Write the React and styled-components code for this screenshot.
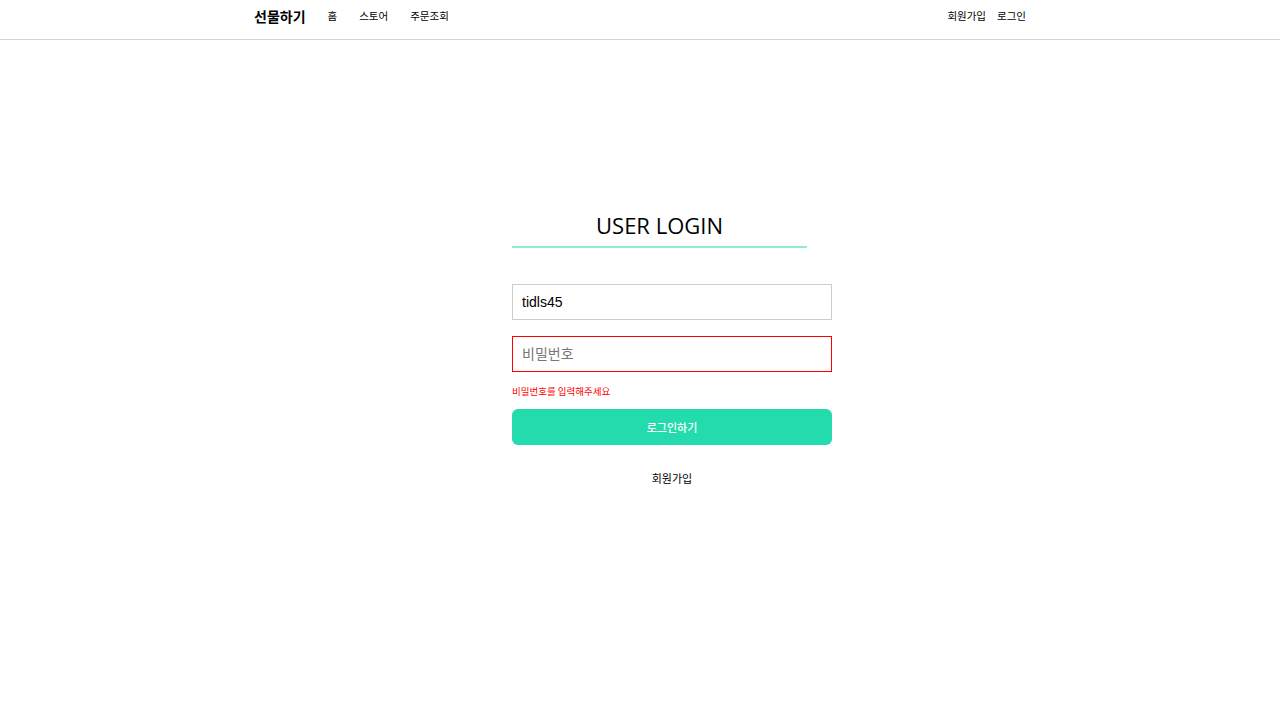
import React from "react";
import styled, { createGlobalStyle } from "styled-components";

const Global = createGlobalStyle`
  * { box-sizing: border-box; }
  body {
    margin: 0;
    background: #fff;
    color: #000;
    font-family: "Liberation Sans", "Noto Sans CJK KR", sans-serif;
  }
`;

const Header = styled.header`
  height: 40px;
  padding-bottom: 8px;
  border-bottom: 1px solid #d4d4d4;
`;

const HeaderInner = styled.div`
  width: 772px;
  height: 100%;
  margin: 0 auto;
  display: flex;
  align-items: center;
  justify-content: space-between;
`;

const NavGroup = styled.nav`
  display: flex;
  align-items: center;
  gap: ${(p) => p.$gap}px;
`;

const Logo = styled.a`
  font-size: 14px;
  font-weight: 700;
  color: #000;
  text-decoration: none;
  font-family: "Noto Sans CJK KR", sans-serif;
`;

const NavLink = styled.a`
  font-size: 10.5px;
  color: #000;
  text-decoration: none;
  font-family: "Noto Sans CJK KR", sans-serif;
`;

const Main = styled.main`
  display: flex;
  justify-content: center;
  padding-top: 169px;
  padding-left: 64px;
`;

const Form = styled.form`
  width: 320px;
  display: flex;
  flex-direction: column;
`;

const Title = styled.h1`
  margin: 0;
  width: 295px;
  text-align: center;
  font-family: "Open Sans", sans-serif;
  font-weight: 400;
  font-size: 22px;
  line-height: 32px;
  padding-bottom: 5px;
  border-bottom: 2px solid #8eead4;
  margin-bottom: 36px;
`;

const Input = styled.input`
  width: 100%;
  height: 36px;
  border: 1px solid ${(p) => (p.$error ? "#ff0000" : "#cccccc")};
  padding: 0 9px;
  font-size: 14px;
  font-family: "Liberation Sans", "Noto Sans CJK KR", sans-serif;
  color: #000;
  outline: none;
  margin-bottom: ${(p) => p.$mb}px;
  &::placeholder { color: #777; }
`;

const ErrorText = styled.p`
  margin: 0 0 11px;
  font-size: 9.5px;
  line-height: 13px;
  color: #ff0000;
  font-family: "Noto Sans CJK KR", sans-serif;
`;

const Button = styled.button`
  height: 36px;
  width: 100%;
  border: none;
  border-radius: 6px;
  background: #24dbad;
  color: #fff;
  font-size: 11px;
  font-weight: 500;
  font-family: "Noto Sans CJK KR", sans-serif;
  cursor: pointer;
`;

const SignUp = styled.a`
  margin-top: 25px;
  align-self: center;
  font-size: 11px;
  color: #000;
  text-decoration: none;
  font-family: "Noto Sans CJK KR", sans-serif;
`;

export default function App() {
  return (
    <>
      <Global />
      <Header>
        <HeaderInner>
          <NavGroup $gap={22}>
            <Logo href="#">선물하기</Logo>
            <NavLink href="#">홈</NavLink>
            <NavLink href="#">스토어</NavLink>
            <NavLink href="#">주문조회</NavLink>
          </NavGroup>
          <NavGroup $gap={11}>
            <NavLink href="#">회원가입</NavLink>
            <NavLink href="#">로그인</NavLink>
          </NavGroup>
        </HeaderInner>
      </Header>
      <Main>
        <Form onSubmit={(e) => e.preventDefault()}>
          <Title>USER LOGIN</Title>
          <Input defaultValue="tidls45" $mb={16} />
          <Input type="password" placeholder="비밀번호" $error $mb={13} />
          <ErrorText>비밀번호를 입력해주세요</ErrorText>
          <Button type="submit">로그인하기</Button>
          <SignUp href="#">회원가입</SignUp>
        </Form>
      </Main>
    </>
  );
}
